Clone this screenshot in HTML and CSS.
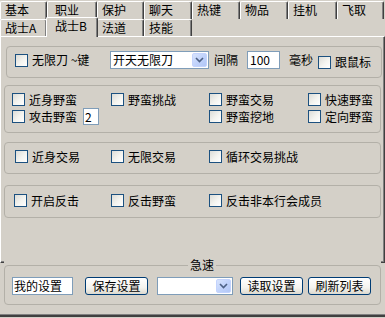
FILE: index.html
```html
<!DOCTYPE html>
<html>
<head>
<meta charset="utf-8">
<link rel="stylesheet" href="styles.css">
</head>
<body>
<div class="window">
  <div class="tabrow row1">
    <div class="tab w47">基本</div>
    <div class="tab w50 pad7">职业</div>
    <div class="tab w47">保护</div>
    <div class="tab w48">聊天</div>
    <div class="tab w48">热键</div>
    <div class="tab w48">物品</div>
    <div class="tab w49">挂机</div>
    <div class="tab w47">飞取</div>
  </div>
  <div class="tabrow row2">
    <div class="tab w47">战士A</div>
    <div class="tab w50 sel">战士B</div>
    <div class="tab w47">法道</div>
    <div class="tab w48">技能</div>
  </div>

  <div class="panel">
    <div class="group g1">
      <span class="box"></span>
      <span class="lbl lbl-key">无限刀 ~键</span>
      <div class="combo combo-wide">
        <span class="combo-text">开天无限刀</span>
        <span class="combo-btn"><svg width="9" height="6" viewBox="0 0 9 6"><path d="M1 1 L4.5 4.5 L8 1" fill="none" stroke="#4d6185" stroke-width="1.6"/></svg></span>
      </div>
      <span class="lbl lbl-gap">间隔</span>
      <span class="field field-ms">100</span>
      <span class="lbl lbl-ms">毫秒</span>
      <span class="box box-low"></span>
      <span class="lbl lbl-follow">跟鼠标</span>
    </div>

    <div class="group g2">
      <label class="cb"><span class="box"></span>近身野蛮</label>
      <label class="cb"><span class="box"></span>野蛮挑战</label>
      <label class="cb"><span class="box"></span>野蛮交易</label>
      <label class="cb"><span class="box"></span>快速野蛮</label>
      <label class="cb"><span class="box"></span>攻击野蛮<span class="field field-num">2</span></label>
      <span></span>
      <label class="cb"><span class="box"></span>野蛮挖地</label>
      <label class="cb"><span class="box"></span>定向野蛮</label>
    </div>

    <div class="group g3">
      <label class="cb"><span class="box"></span>近身交易</label>
      <label class="cb"><span class="box"></span>无限交易</label>
      <label class="cb"><span class="box"></span>循环交易挑战</label>
    </div>

    <div class="group g4">
      <label class="cb"><span class="box"></span>开启反击</label>
      <label class="cb"><span class="box"></span>反击野蛮</label>
      <label class="cb"><span class="box"></span>反击非本行会成员</label>
    </div>
  </div>

  <div class="quick-wrap">
    <fieldset class="quick">
      <legend>急速</legend>
      <div class="quick-row">
        <span class="field field-name">我的设置</span>
        <span class="btn btn-save">保存设置</span>
        <div class="combo combo-list">
          <span class="combo-text"></span>
          <span class="combo-btn"><svg width="9" height="6" viewBox="0 0 9 6"><path d="M1 1 L4.5 4.5 L8 1" fill="none" stroke="#4d6185" stroke-width="1.6"/></svg></span>
        </div>
        <span class="btn btn-load">读取设置</span>
        <span class="btn btn-refresh">刷新列表</span>
      </div>
    </fieldset>
  </div>

  <div class="statusbar"></div>
</div>
</body>
</html>
```

FILE: styles.css
```css
* { box-sizing: border-box; }

html, body {
  margin: 0;
  padding: 0;
  background: #d4d0c8;
}

body {
  width: 385px;
  height: 318px;
  overflow: hidden;
  font-family: "Noto Sans CJK SC", "Noto Sans", sans-serif;
  font-size: 12px;
  color: #000;
}

.window {
  width: 385px;
  height: 318px;
}

/* ---------- tabs ---------- */
.tabrow {
  display: flex;
  align-items: flex-start;
}

.row1 {
  padding-top: 1px;
  height: 19px;
}

.row2 {
  height: 17px;
}

.tab {
  height: 18px;
  border-top: 1px solid #fff;
  border-left: 1px solid #fff;
  border-right: 1px solid #404040;
  box-shadow: inset -1px 0 0 #808080;
  border-radius: 2px 2px 0 0;
  padding-left: 4px;
  line-height: 16px;
  background: #d4d0c8;
  white-space: nowrap;
}

.row2 .tab {
  height: 17px;
  line-height: 15px;
}

.pad7 { padding-left: 7px; }

.w47 { width: 47px; }
.w48 { width: 48px; }
.w49 { width: 49px; }
.w50 { width: 50px; }

.row2 .tab.sel {
  height: 20px;
  margin-top: -2px;
  margin-left: -1px;
  width: 52px;
  margin-right: -1px;
  padding-left: 8px;
  line-height: 16px;
  z-index: 2;
}

/* ---------- panel ---------- */
.panel {
  height: 227px;
  border-top: 1px solid #fff;
  border-left: 1px solid #fff;
  border-right: 1px solid #404040;
  border-bottom: 1px solid #404040;
  box-shadow: inset -1px -1px 0 #808080;
}

.group {
  border: 1px solid #b3b0a8;
  border-radius: 4px;
}

.g1 {
  margin: 9px 0 0 5px;
  width: 376px;
  height: 32px;
  padding: 4px 0 0 8px;
  display: flex;
  align-items: flex-start;
}

.g2, .g3, .g4 {
  margin-left: 3px;
  width: 377px;
  display: grid;
  grid-auto-rows: 17px;
}

.g2 {
  margin-top: 7px;
  height: 48px;
  padding: 5px 0 0 7px;
  grid-template-columns: 99px 98px 99px 1fr;
}

.g3 {
  margin-top: 9px;
  height: 32px;
  padding: 5px 0 0 10px;
  grid-template-columns: 96px 98px 1fr;
}

.g4 {
  margin-top: 11px;
  height: 33px;
  padding: 6px 0 0 9px;
  grid-template-columns: 97px 98px 1fr;
}

/* ---------- checkbox ---------- */
.box {
  display: inline-block;
  flex: none;
  width: 13px;
  height: 13px;
  border: 1px solid #1c5180;
  background: linear-gradient(135deg, #dcdcd7 0%, #f4f4f0 55%, #ffffff 100%);
}

.cb {
  display: flex;
  align-items: center;
  height: 17px;
  line-height: 17px;
  white-space: nowrap;
}

.cb .box {
  margin-right: 4px;
}

.g1 .box {
  margin-top: 3px;
}

.g1 .box-low {
  margin-top: 5px;
}

/* ---------- labels in first group ---------- */
.lbl {
  line-height: 18px;
  height: 18px;
  white-space: nowrap;
}

.lbl-key {
  margin-left: 4px;
  width: 78px;
}

.lbl-gap {
  width: 38px;
  padding-left: 5px;
}

.lbl-ms {
  width: 38px;
  padding-left: 9px;
}

.lbl-follow {
  margin-left: 4px;
  margin-top: 2px;
}

/* ---------- fields ---------- */
.field {
  display: inline-block;
  background: #fff;
  border: 1px solid #7f9db9;
  height: 18px;
  line-height: 16px;
  padding: 0 2px;
  white-space: nowrap;
}

.field-ms {
  width: 33px;
}

.field-num {
  width: 16px;
  height: 17px;
  line-height: 15px;
  margin-left: 6px;
  padding: 0 1px;
}

.field-name {
  width: 61px;
  padding: 0 1px;
}

/* ---------- combo ---------- */
.combo {
  display: flex;
  height: 18px;
  background: #fff;
  border: 1px solid #7f9db9;
  padding: 0 1px 0 2px;
}

.combo-wide {
  width: 99px;
}

.combo-list {
  width: 76px;
  margin-left: 9px;
}

.combo-text {
  flex: 1;
  line-height: 16px;
  white-space: nowrap;
}

.combo-btn {
  width: 15px;
  height: 14px;
  margin-top: 1px;
  border: 1px solid #c3d3fd;
  border-radius: 2px;
  background: linear-gradient(135deg, #d8e4fd 0%, #c1d3fb 50%, #b2c7f6 100%);
  display: flex;
  align-items: center;
  justify-content: center;
}

/* ---------- bottom group ---------- */
.quick-wrap {
  margin: -5px 4px 0 4px;
  background: #d4d0c8;
}

.quick {
  margin: 0;
  padding: 5px 0 9px 7px;
  border: 1px solid #b3b0a8;
  border-radius: 4px;
  min-width: 0;
}

.quick legend {
  margin-left: 176px;
  padding: 0 2px;
  line-height: 14px;
  font-size: 12px;
}

.quick-row {
  display: flex;
  height: 18px;
}

.btn {
  display: flex;
  align-items: center;
  justify-content: center;
  width: 63px;
  height: 18px;
  border: 1px solid #003c74;
  border-radius: 3px;
  background: linear-gradient(180deg, #ffffff 0%, #f4f3ee 60%, #dcd9cf 100%);
  line-height: 16px;
  white-space: nowrap;
}

.btn-save {
  margin-left: 12px;
}

.btn-load {
  margin-left: 7px;
}

.btn-refresh {
  margin-left: 5px;
}

/* ---------- bottom edge ---------- */
.statusbar {
  margin-top: 9px;
  height: 3px;
  border-top: 1px solid #808080;
  background: #404040;
}
```
